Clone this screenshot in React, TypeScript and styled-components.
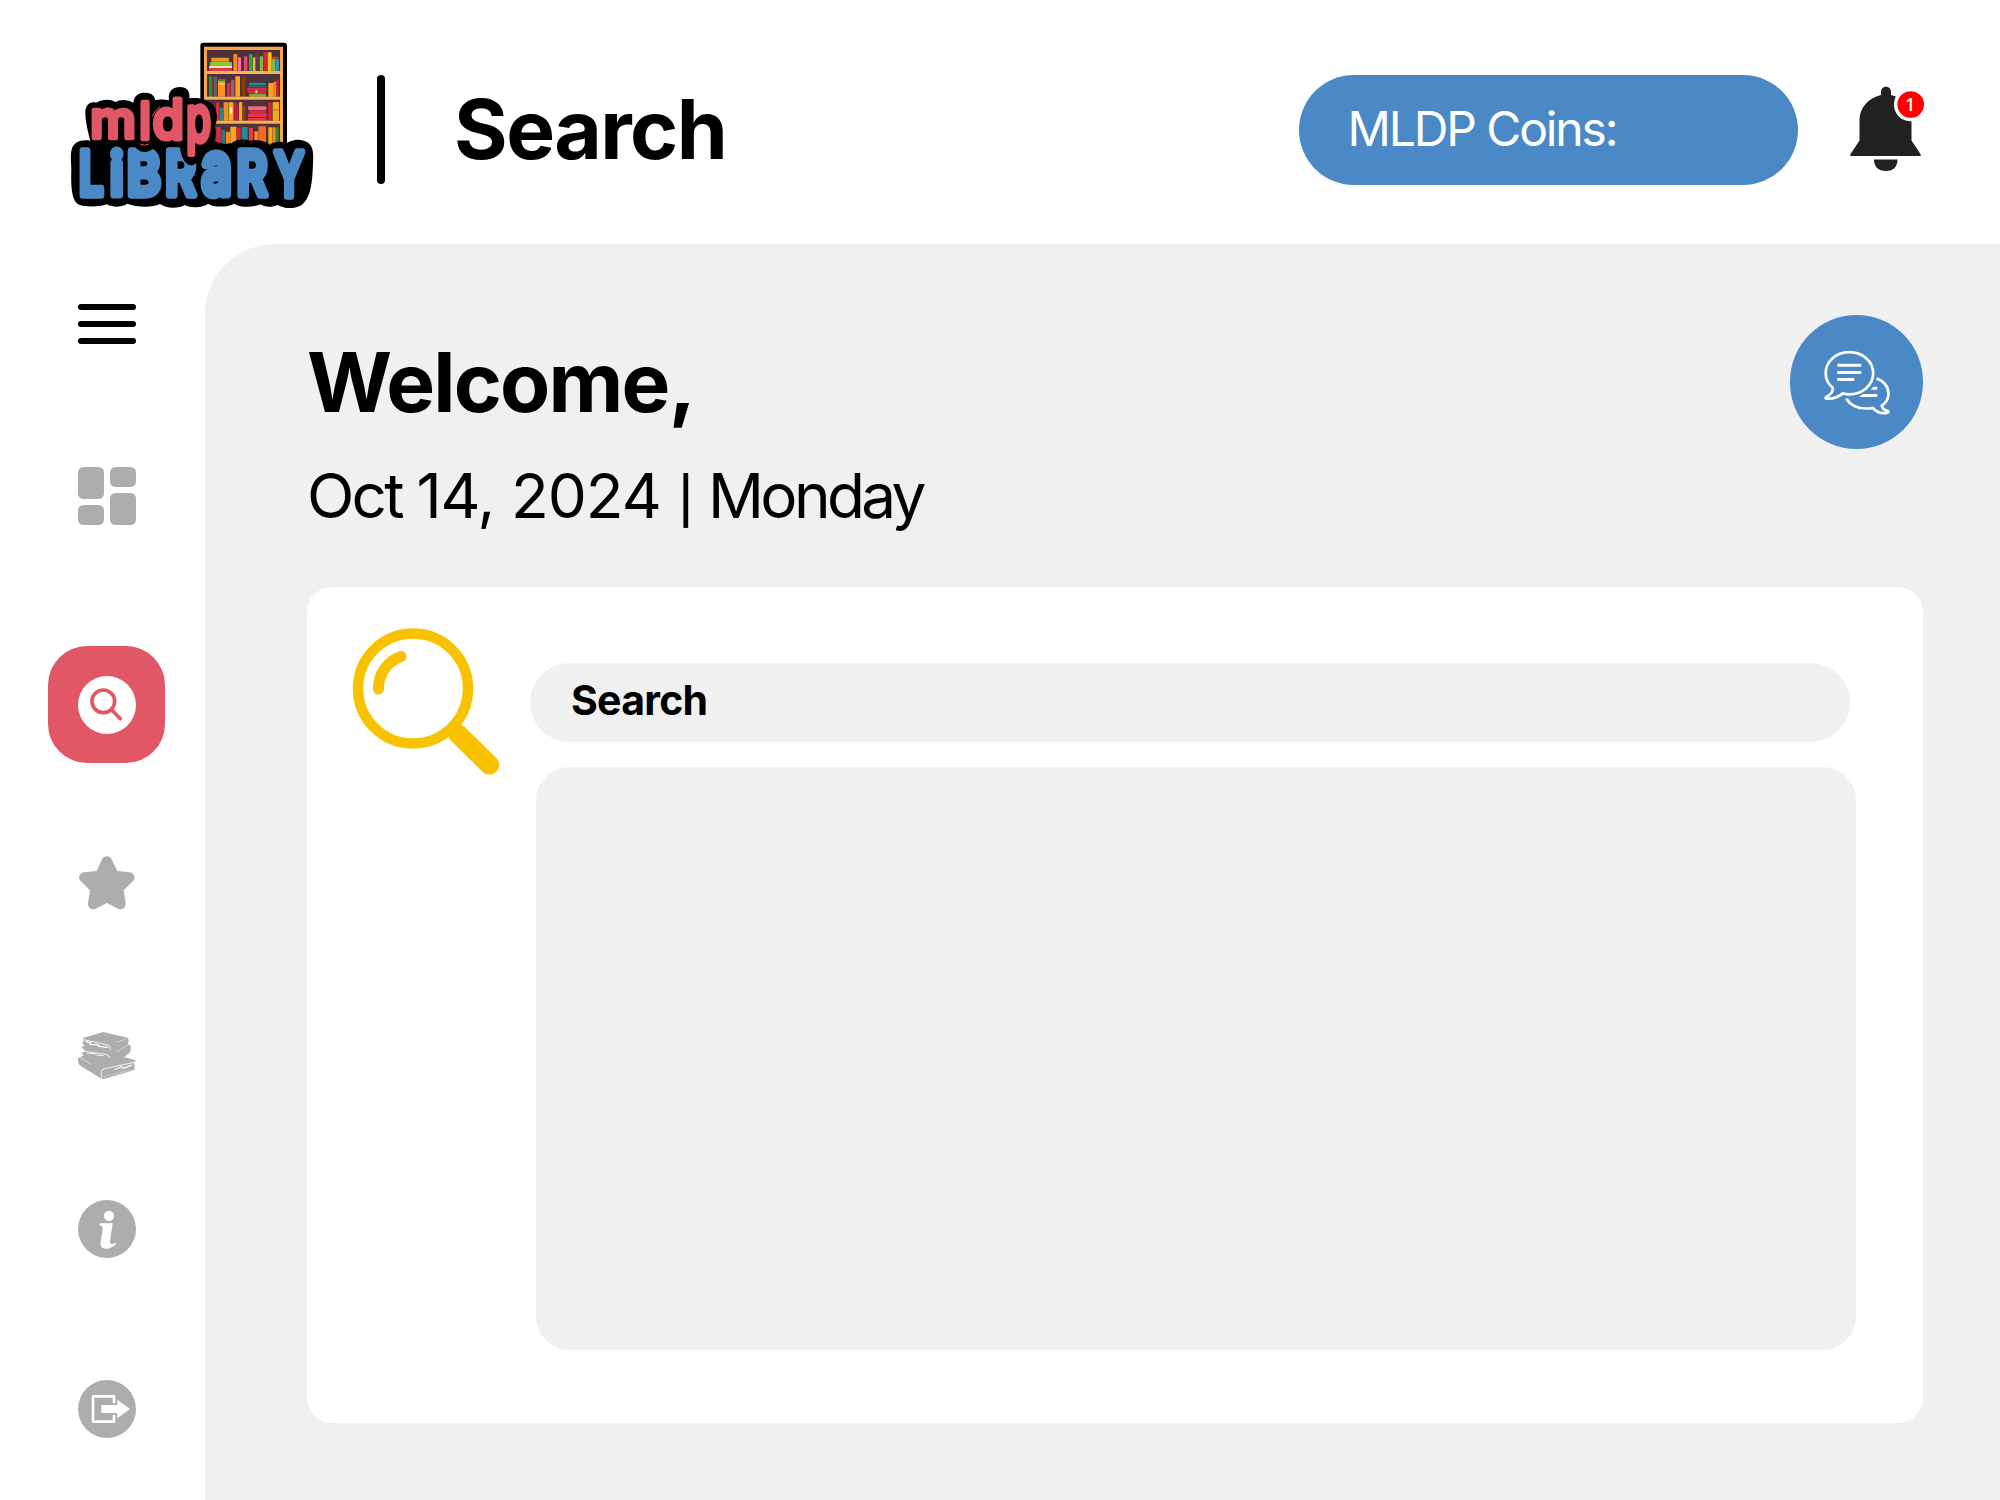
import React from "react";
import styled, { createGlobalStyle } from "styled-components";

const GlobalStyle = createGlobalStyle`
  * { box-sizing: border-box; }
  body { margin: 0; background: #fff; }
`;

const blue = "#4b89c6";
const red = "#e15766";
const grey = "#adadad";
const mist = "#f0f0f0";

const Page = styled.div`
  width: 2000px;
  height: 1500px;
  overflow: hidden;
  display: flex;
  flex-direction: column;
  background: #fff;
  color: #000;
  font-family: Inter, "Liberation Sans", sans-serif;
`;

const Header = styled.header`
  flex: none;
  height: 243.5px;
  padding: 16px 75px 0 50px;
  display: flex;
  align-items: center;
`;

const LogoArt = styled.svg`
  width: 280px;
  height: 190px;
  flex: none;
`;

const Divider = styled.span`
  width: 8px;
  height: 109px;
  margin-left: 47px;
  border-radius: 4px;
  background: #000;
`;

const PageTitle = styled.h1`
  margin: 0 0 0 69px;
  font-size: 82px;
  line-height: 100px;
  font-weight: 700;
  letter-spacing: -0.019em;
`;

const Coins = styled.div`
  width: 499.5px;
  height: 110px;
  margin-left: auto;
  padding: 0 0 2px 49px;
  display: flex;
  align-items: center;
  border-radius: 55px;
  background: ${blue};
  color: #fff;
  font-size: 48px;
  letter-spacing: -0.044em;
`;

const BellArt = styled.svg`
  width: 75px;
  height: 86px;
  margin: 0 0 1px 52px;
  overflow: visible;
`;

const Body = styled.div`
  flex: 1;
  display: flex;
`;

const Sidebar = styled.nav`
  width: 205px;
  padding: 51.5px 0 0 9px;
  display: flex;
  flex-direction: column;
  align-items: center;
`;

const NavItem = styled.a<{ $gap: number; $active?: boolean }>`
  flex: none;
  margin-top: ${(p) => p.$gap}px;
  margin-left: ${(p) => (p.$active ? -1 : 0)}px;
  width: ${(p) => (p.$active ? 117 : 58)}px;
  height: ${(p) => (p.$active ? 117 : 58)}px;
  display: flex;
  align-items: center;
  justify-content: center;
  border-radius: ${(p) => (p.$active ? 39 : 0)}px;
  background: ${(p) => (p.$active ? red : "transparent")};
`;

const NavIcon = styled.svg<{ $color?: string }>`
  width: 58px;
  height: 58px;
  fill: ${(p) => p.$color ?? grey};
`;

const Main = styled.main`
  flex: 1;
  padding: 71.5px 77px 0 102px;
  border-top-left-radius: 70px;
  background: ${mist};
`;

const Intro = styled.div`
  display: flex;
  justify-content: space-between;
`;

const Greeting = styled.h2`
  margin: 18px 0 25px;
  font-size: 82px;
  line-height: 100px;
  font-weight: 700;
  letter-spacing: -0.022em;
`;

const Today = styled.p`
  margin: 0;
  font-size: 62px;
  line-height: 76px;
  letter-spacing: -0.045em;
`;

const DayNumber = styled.span`
  letter-spacing: -0.016em;
`;

const Weekday = styled.span`
  letter-spacing: -0.058em;
`;

const Bar = styled.span`
  display: inline-block;
  transform: translateY(5px) scaleY(0.74);
`;

const ChatButton = styled.button`
  width: 133.5px;
  height: 133.5px;
  padding: 0;
  border: 0;
  border-radius: 50%;
  background: ${blue};
`;

const ChatArt = styled.svg`
  display: block;
  width: 133.5px;
  height: 133.5px;
`;

const Card = styled.section`
  height: 836px;
  margin-top: 53px;
  padding: 40px 0 0 45px;
  display: flex;
  border-radius: 25px;
  background: #fff;
`;

const LensArt = styled.svg`
  width: 150px;
  height: 150px;
  flex: none;
`;

const SearchColumn = styled.div`
  margin: 35.5px 0 0 28px;
`;

const SearchField = styled.div`
  width: 1320px;
  height: 79px;
  padding: 0 0 5px 41px;
  display: flex;
  align-items: center;
  border-radius: 39.5px;
  background: ${mist};
  font-size: 41px;
  font-weight: 700;
  letter-spacing: -0.018em;
`;

const Results = styled.div`
  width: 1320px;
  height: 583px;
  margin: 25px 0 0 6px;
  border-radius: 33px;
  background: ${mist};
`;

type Book = [x: number, y: number, w: number, h: number, color: string];

const books: Book[] = [
  [484, 83, 53, 12, "#f5921e"], [480, 96, 66, 12, "#8cc63f"], [477, 108, 69, 7, "#fbe3ac"], [477, 115, 69, 8, "#ee3348"],
  [550, 72, 12, 51, "#f28a1c"], [564, 82, 9, 41, "#f770a0"], [582, 79, 10, 44, "#e8476a"], [597, 73, 11, 50, "#3fa142"],
  [609, 82, 11, 41, "#f7b32b"], [616, 69, 10, 54, "#5d3b52"], [629, 79, 10, 44, "#7fb93c"], [640, 67, 11, 56, "#e01f3d"],
  [653, 67, 12, 56, "#f9c11c"], [666, 80, 19, 7, "#b5450f"], [666, 87, 10, 36, "#7dbb42"], [676, 87, 11, 36, "#3a8bc0"],
  [477, 138, 10, 63, "#2f8a3a"], [491, 140, 10, 60, "#7c5468"], [504, 147, 21, 53, "#f6951d"], [504, 147, 21, 6, "#2c8c3c"],
  [504, 160, 21, 4, "#f9d04a"], [531, 158, 10, 42, "#e5293f"], [543, 150, 10, 50, "#a95a65"], [556, 139, 14, 61, "#f8a51b"],
  [575, 140, 12, 60, "#8b3a12"], [597, 158, 50, 8, "#2a8590"], [595, 166, 55, 7, "#355c70"], [591, 174, 59, 7, "#e3283d"],
  [593, 181, 56, 9, "#d92a45"], [597, 191, 51, 9, "#6fb23b"], [616, 181, 6, 9, "#f9dfaf"], [655, 159, 16, 41, "#faa61a"],
  [670, 155, 9, 45, "#f6861f"], [679, 148, 7, 52, "#db1e36"],
  [480, 226, 12, 46, "#6b4258"], [498, 217, 10, 55, "#e42b3c"], [509, 233, 11, 39, "#2c8590"], [521, 217, 14, 55, "#f3901b"],
  [536, 217, 15, 55, "#fbab18"], [540, 232, 7, 19, "#fff2d0"], [551, 219, 14, 53, "#c41c35"], [567, 216, 10, 56, "#faa51c"],
  [578, 226, 9, 46, "#8a3b12"], [594, 229, 55, 11, "#f5628b"], [597, 241, 51, 8, "#c7303d"], [594, 250, 56, 11, "#e53347"],
  [594, 263, 55, 9, "#e52f48"], [655, 217, 10, 55, "#e21f35"], [668, 216, 19, 56, "#faa81b"], [668, 238, 19, 4, "#e07b15"],
  [499, 291, 13, 48, "#e3283d"], [514, 300, 12, 39, "#2c7781"], [528, 305, 12, 34, "#f6881c"], [541, 290, 18, 49, "#faa71a"],
  [560, 293, 12, 46, "#df2139"], [575, 291, 18, 48, "#238c99"], [597, 293, 12, 42, "#ed3a42"], [613, 304, 11, 35, "#f38b20"],
  [625, 289, 23, 50, "#fb6a24"], [655, 292, 11, 47, "#fba71a"], [667, 292, 10, 47, "#ee8b1c"], [678, 291, 8, 48, "#2d8a3c"],
];

/* Logo lettering: each letter sits on its own baseline with its own stretch. */
type Letter = [char: string, x: number, y: number, sx: number, sy: number];

const libraryLetters: Letter[] = [
  ["L", 87, 496, 0.71, 1],
  ["i", 180, 496, 0.84, 0.97],
  ["B", 231, 496, 0.84, 1],
  ["R", 346, 496, 0.77, 1],
  ["a", 455, 493, 0.85, 1.2],
  ["R", 560, 496, 0.77, 1],
  ["Y", 673, 498, 0.68, 1],
];

const mldpLetters: Letter[] = [
  ["m", 121, 325, 1, 1],
  ["l", 268, 328, 0.9, 0.98],
  ["d", 308, 328, 0.98, 1.08],
  ["p", 409, 334, 0.78, 1.22],
];

function Logo() {
  return (
    <LogoArt viewBox="0 15 840 570" role="img" aria-label="MLDP Library">
      <rect x="451" y="38" width="260" height="330" rx="9" fill="#000" />
      <rect x="462" y="50" width="237" height="295" fill="#f4a545" />
      <rect x="471" y="60" width="219" height="280" fill="#4b323d" />
      {books.map(([x, y, w, h, c], i) => (
        <rect key={i} x={x} y={y} width={w} height={h} rx="2" fill={c} />
      ))}
      {[123, 200, 272].map((y) => (
        <rect key={y} x="465" y={y} width="231" height="9" fill="#fbb155" />
      ))}
      <path
        d="M106 244C108 221 124 213 139 218C158 207 181 207 196 216C212 207 232 208 250 218C253 194 269 187 287 188C305 188 314 199 316 211C329 206 346 209 357 211C353 185 367 171 389 171C410 171 421 183 418 205C442 201 475 206 489 225C504 243 503 271 494 290C500 306 497 322 492 334C512 342 530 342 545 340C557 328 580 326 601 332C624 326 646 334 661 344C672 333 696 333 709 340C730 326 760 326 776 340C792 354 790 376 789 402C787 444 786 500 756 524C737 537 704 538 683 525C664 534 640 530 632 523C616 531 574 535 553 521C530 533 489 532 474 521C463 532 421 536 405 525C385 536 348 536 330 522C308 533 261 533 232 521C209 535 180 530 171 523C145 532 102 532 84 523C65 510 62 470 64 417C62 381 60 356 74 342C86 331 103 329 121 332C114 307 105 270 106 244Z"
        fill="#000"
      />
      <g
        fill={blue}
        stroke={blue}
        strokeWidth="22"
        strokeLinejoin="round"
        fontFamily="Inter, sans-serif"
        fontWeight="600"
        fontSize="183"
      >
        {libraryLetters.map(([char, x, y, sx, sy], i) => (
          <text key={i} transform={`translate(${x} ${y}) scale(${sx} ${sy})`}>
            {char}
          </text>
        ))}
      </g>
      <path d="M388 335C390 378 404 405 424 406C440 405 446 390 447 366L470 345L460 320H388Z" fill="#000" />
      <path d="M248 334C254 356 266 365 284 366C301 366 314 356 320 340Z" fill="#000" />
      <g
        fill={red}
        stroke={red}
        strokeWidth="14"
        strokeLinejoin="round"
        fontFamily="Inter, sans-serif"
        fontWeight="500"
        fontSize="154"
      >
        {mldpLetters.map(([char, x, y, sx, sy]) => (
          <text key={char} transform={`translate(${x} ${y}) scale(${sx} ${sy})`}>
            {char}
          </text>
        ))}
      </g>
      <g fill="none" stroke={red} strokeWidth="3" strokeLinecap="round">
        <path d="M170 233Q186 233 200 243" />
        <path d="M307 259Q313 240 329 231" />
        <path d="M272 343Q283 349 295 343" />
        <path d="M450 336Q466 333 475 320" />
      </g>
    </LogoArt>
  );
}

function Bell() {
  return (
    <BellArt viewBox="0 0 75 86" aria-label="Notifications">
      <path
        fill="#212121"
        d="M31 9V6C31 -1 41 -1 41 6V9C54 12 61.5 23 61.5 34V54.5L70.5 68Q71.5 70 69.5 70H1.500Q-0.500 70 0.500 68L9.500 54.500V34C9.500 22 18 12 31 9ZM24 73.500H47.500C47.500 80.500 43.500 85 36 85C28 85 24 80.500 24 73.500Z"
      />
      <circle cx="60.700" cy="18.500" r="16.800" fill="#fff" />
      <circle cx="60.700" cy="18.500" r="13.300" fill="#ff0000" />
      <text x="60.200" y="25" textAnchor="middle" fill="#fff" fontFamily="Open Sans, sans-serif" fontWeight="600" fontSize="18">
        1
      </text>
    </BellArt>
  );
}

function ChatIcon() {
  return (
    <ChatArt viewBox="58.500 45 402 402" fill="none" stroke="#fff" strokeWidth="8">
      <path d="M187 264C172 252 166 238 166 220C166 184 198 157 237 157C277 157 309 184 309 220C309 256 277 284 237 284C230 284 224 283 218 281C205 291 185 299 166 296C165 294 167 291 172 289C182 283 189 276 187 264Z" />
      <path d="M201 196.500H273M201 218H273M201 239.500H252" strokeWidth="9" />
      <path d="M319 236C342 244 355 260 355 283C355 298 348 309 335 318C336 328 344 332 354 334Q357 337 352 339C337 343 320 338 308 325C275 330 244 322 228 297" />
      <path fill="#fff" stroke="none" d="M310 261H321V270H301ZM278 283H321V292H266Z" />
    </ChatArt>
  );
}

export default function App() {
  return (
    <Page>
      <GlobalStyle />
      <Header>
        <Logo />
        <Divider />
        <PageTitle>Search</PageTitle>
        <Coins>MLDP Coins:</Coins>
        <Bell />
      </Header>
      <Body>
        <Sidebar>
          <NavItem $gap={0} aria-label="Menu">
            <NavIcon viewBox="0 0 58 58" $color="#000">
              <rect y="9" width="58" height="6" rx="3" />
              <rect y="26" width="58" height="6" rx="3" />
              <rect y="43" width="58" height="6" rx="3" />
            </NavIcon>
          </NavItem>
          <NavItem $gap={114} aria-label="Dashboard">
            <NavIcon viewBox="0 0 58 58">
              <rect width="26" height="32" rx="5.500" />
              <rect x="32" width="26" height="20" rx="5.500" />
              <rect y="38" width="26" height="20" rx="5.500" />
              <rect x="32" y="26" width="26" height="32" rx="5.500" />
            </NavIcon>
          </NavItem>
          <NavItem $gap={121} $active aria-label="Search">
            <NavIcon viewBox="114 138 174 174">
              <circle cx="201" cy="225" r="87" fill="#fff" />
              <g fill="none" stroke={red} strokeWidth="11" strokeLinecap="round">
                <circle cx="190" cy="214" r="34" />
                <path d="M215 239L241 266" />
              </g>
            </NavIcon>
          </NavItem>
          <NavItem $gap={91} aria-label="Favorites">
            <NavIcon viewBox="114 672 174 174">
              <path d="M185 690C190 675 211 675 216 690L232 723L269 727C284 730 288 744 279 753L251 781L257 820C258 834 245 842 234 836L200.500 819L167 836C156 842 143 834 144 820L150 781L122 753C113 744 117 730 132 727L170 723Z" />
            </NavIcon>
          </NavItem>
          <NavItem $gap={114.5} aria-label="Books">
            <NavIcon viewBox="54 51 174 174">
              <path d="M68 84L130 66L202 83Q208 88 205 98L203 102L212 107Q214 122 208 129L192 141L227 151L222 158L224 180L131 207L122 205L58 165Q52 156 55 143L70 137L66 128L76 122L64 112L74 106L66 98L72 92Z" />
              <g fill="none" stroke="#fff" strokeWidth="2.500" strokeLinecap="round">
                <path d="M72 89L143 105Q153 109 151 120" />
                <path d="M78 95L92 98L90 103L112 104L118 109L142 112" strokeWidth="4" />
                <path d="M70 123L140 134Q148 137 149 143" />
                <path d="M82 130L104 131L112 136L130 137" />
                <path d="M170 125L205 104M171 96L196 88" strokeWidth="1.500" />
                <path d="M57 141L92 162" strokeWidth="1.500" />
                <path d="M124 203V185Q125 178 134 176L222 157" />
                <path d="M166 178L186 170L190 175L214 166" strokeWidth="3.500" />
                <path d="M131 200L220 179" strokeWidth="1" />
              </g>
            </NavIcon>
          </NavItem>
          <NavItem $gap={115.5} aria-label="Information">
            <NavIcon viewBox="54 60 174 174">
              <circle cx="141" cy="147" r="87" />
              <g fill="#fff">
                <circle cx="147" cy="107.500" r="15.500" />
                <path d="M119 130H158L150 184C149 195 158 193 166 188L168 192C158 203 146 207 137 206C124 205 120 197 122 186L128 148C129 139 126 137 119 137Z" />
              </g>
            </NavIcon>
          </NavItem>
          <NavItem $gap={121.5} aria-label="Log out">
            <NavIcon viewBox="54 598 174 174">
              <circle cx="141" cy="685" r="87" />
              <path d="M162 668V647H99V723H162V702" fill="none" stroke="#fff" strokeWidth="8" strokeLinejoin="round" />
              <path d="M124 673H172V657L210 685L172 713V697H124Z" fill="#fff" />
            </NavIcon>
          </NavItem>
        </Sidebar>
        <Main>
          <Intro>
            <div>
              <Greeting>Welcome,</Greeting>
              <Today>
                Oct <DayNumber>14, 2024</DayNumber> <Bar>|</Bar> <Weekday>Monday</Weekday>
              </Today>
            </div>
            <ChatButton aria-label="Chat">
              <ChatIcon />
            </ChatButton>
          </Intro>
          <Card>
            <LensArt viewBox="352 627 150 150" fill="none" stroke="#f8c200" strokeLinecap="round">
              <circle cx="413" cy="688.500" r="55" strokeWidth="10.500" />
              <path d="M378.500 689A33.500 33.500 0 0 1 401 656.500" strokeWidth="11" />
              <path d="M458 734L489.500 765" strokeWidth="19.500" />
            </LensArt>
            <SearchColumn>
              <SearchField>Search</SearchField>
              <Results />
            </SearchColumn>
          </Card>
        </Main>
      </Body>
    </Page>
  );
}
